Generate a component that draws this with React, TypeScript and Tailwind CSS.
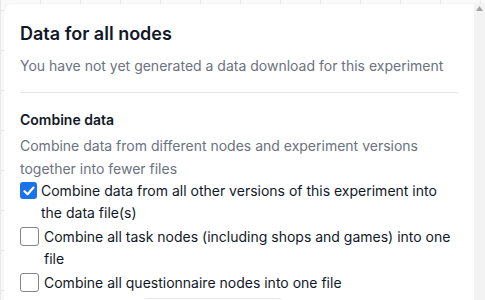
import React from "react";

type Option = { label: string; checked: boolean };

const options: Option[] = [
  { label: "Combine data from all other versions of this experiment into the data file(s)", checked: true },
  { label: "Combine all task nodes (including shops and games) into one file", checked: false },
  { label: "Combine all questionnaire nodes into one file", checked: false },
];

function Checkbox({ checked }: { checked: boolean }) {
  if (checked) {
    return (
      <span className="mt-[2px] mr-[4px] flex h-[17px] w-[17px] shrink-0 items-center justify-center rounded-[3px] bg-[#1a73e8]">
        <svg width="12" height="10" viewBox="0 0 12 10" fill="none">
          <path d="M1.5 5.2 4.6 8.2 10.5 1.6" stroke="#fff" strokeWidth="2.2" strokeLinecap="round" strokeLinejoin="round" />
        </svg>
      </span>
    );
  }
  return (
    <span className="mt-[1px] mr-[5px] h-[19px] w-[19px] shrink-0 rounded-[3px] border border-[#858585] bg-white" />
  );
}

export default function App() {
  return (
    <div className="h-[300px] w-[485px] overflow-hidden bg-[#fafafa] bg-[linear-gradient(to_right,#e8e8e8_1px,transparent_1px),linear-gradient(to_bottom,#e8e8e8_1px,transparent_1px)] bg-[size:40px_40px] bg-[position:0_10px] pl-1 pt-1 font-['Inter','Noto_Sans',sans-serif]">
      <div className="flex h-[400px] w-[481px] rounded-tl-lg bg-white shadow-[0_0_2px_rgba(0,0,0,0.08)]">
        {/* content */}
        <div className="flex-1 px-4 pt-4">
          <h2 className="text-lg font-semibold leading-7 text-[#111827]">Data for all nodes</h2>
          <p className="mt-2 text-sm leading-5 text-[#6b7280]">
            You have not yet generated a data download for this experiment
          </p>

          <div className="mt-4 border-t border-[#e5e7eb] pt-[17px]">
            <h3 className="text-sm font-semibold leading-5 text-[#111827]">Combine data</h3>
            <p className="mt-1 text-sm leading-[23px] text-[#6b7280]">
              Combine data from different nodes and experiment versions together into fewer files
            </p>

            <div className="flex flex-col gap-[2px]">
              {options.map((o) => (
                <label key={o.label} className="flex items-start text-sm leading-[22px] text-[#111827]">
                  <Checkbox checked={o.checked} />
                  <span>{o.label}</span>
                </label>
              ))}
            </div>

            <div className="mt-1 ml-[122px] h-10 w-[142px] rounded-md border border-[#e5e7eb]" />
          </div>
        </div>

        {/* scrollbar */}
        <div className="flex w-[11px] shrink-0 justify-center bg-[#f3f3f3] pt-[2px]">
          <svg width="7" height="5" viewBox="0 0 7 5">
            <polygon points="3.5,0 7,5 0,5" fill="#a3a3a3" />
          </svg>
        </div>
      </div>
    </div>
  );
}
